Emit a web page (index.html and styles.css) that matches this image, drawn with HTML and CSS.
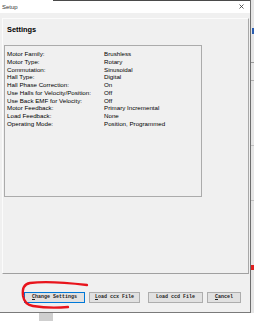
FILE: index.html
```html
<!DOCTYPE html>
<html>
<head>
<meta charset="utf-8">
<link rel="stylesheet" href="styles.css">
</head>
<body>
<div class="screen">
  <div class="dialog">
    <div class="titlebar">
      <span class="title">Setup</span>
      <svg class="close" width="5" height="5" viewBox="0 0 5 5"><path d="M0.5 0.5L4.5 4.5M4.5 0.5L0.5 4.5" stroke="#333" stroke-width="0.8"/></svg>
    </div>
    <div class="body">
      <div class="panel">
        <div class="heading">Settings</div>
        <div class="listbox">
          <div class="grid">
            <span>Motor Family:</span><span>Brushless</span>
            <span>Motor Type:</span><span>Rotary</span>
            <span>Commutation:</span><span>Sinusoidal</span>
            <span>Hall Type:</span><span>Digital</span>
            <span>Hall Phase Correction:</span><span>On</span>
            <span>Use Halls for Velocity/Position:</span><span>Off</span>
            <span>Use Back EMF for Velocity:</span><span>Off</span>
            <span>Motor Feedback:</span><span>Primary Incremental</span>
            <span>Load Feedback:</span><span>None</span>
            <span>Operating Mode:</span><span>Position, Programmed</span>
          </div>
        </div>
      </div>
      <div class="buttons">
        <button class="btn btn-change focused"><u>C</u>hange Settings</button>
        <button class="btn btn-ccx"><u>L</u>oad ccx File</button>
        <button class="btn btn-ccd">Load ccd File</button>
        <button class="btn btn-cancel"><u>C</u>ancel</button>
      </div>
    </div>
  </div>
  <div class="strip"></div>
</div>
<div class="below">
  <div class="block"></div>
</div>
<svg class="scribble" width="254" height="321" viewBox="0 0 254 321">
  <path d="M87 285 C70 283 45 281 30 283 C24 284 22 289 23 296 C24 302 27 305 33 306 C45 308 58 308 68 307" fill="none" stroke="#e8141c" stroke-width="2.3" stroke-linecap="round"/>
</svg>
</body>
</html>
```
FILE: styles.css
```css
html, body {
  margin: 0;
  padding: 0;
}
body {
  width: 254px;
  height: 321px;
  overflow: hidden;
  position: relative;
  background: #ffffff;
  font-family: "Liberation Sans", Arial, sans-serif;
  color: #000;
}
.screen {
  display: flex;
  height: 313px;
}
.dialog {
  width: 250px;
  height: 312px;
  display: flex;
  flex-direction: column;
  border-right: 1px solid #6e6e6e;
  border-bottom: 1px solid #7a7a7a;
}
.titlebar {
  height: 13px;
  background: linear-gradient(to right, transparent 53px, #4a4a4a 53px) no-repeat top left / 100% 1px, #ffffff;
  display: flex;
  align-items: center;
  justify-content: space-between;
  padding: 0 6px 0 2px;
  flex: none;
}
.title {
  font-size: 6px;
  line-height: 6px;
  color: #333;
}
.close {
  display: block;
}
.body {
  flex: 1;
  background: #f0f0f0;
  padding: 5px 1px 0 2px;
  display: flex;
  flex-direction: column;
}
.panel {
  height: 254px;
  border-top: 1px solid #fbfbfb;
  border-left: 1px solid #fbfbfb;
  border-right: 1px solid #a8a8a8;
  border-bottom: 1px solid #a0a0a0;
  background: #f0f0f0;
}
.heading {
  height: 19px;
  padding: 7px 0 0 4px;
  font-weight: bold;
  font-size: 7.4px;
  line-height: 8px;
  color: #000;
}
.listbox {
  margin-left: 1px;
  border: 1px solid #ababab;
  padding: 4px 0 0 2px;
  width: 194px;
  height: 146px;
}
.grid {
  display: grid;
  grid-template-columns: 97px 1fr;
  font-size: 6.2px;
  line-height: 7.75px;
  white-space: nowrap;
  color: #000;
}
.buttons {
  display: flex;
  padding-left: 22px;
  margin-top: 18px;
}
.btn {
  height: 11px;
  margin: 0;
  padding: 0;
  background: #e1e1e1;
  border: 1px solid #adadad;
  font-family: "Liberation Mono", "Courier New", monospace;
  font-size: 5px;
  font-weight: bold;
  line-height: 9px;
  color: #222;
  text-align: center;
}
.focused {
  border-color: #0078d7;
}
.btn-change { width: 61px; }
.btn-ccx { width: 51px; margin-left: 4px; }
.btn-ccd { width: 55px; margin-left: 8px; }
.btn-cancel { width: 34px; margin-left: 4px; }
.strip {
  flex: 1;
  background:
    linear-gradient(#2a5db0, #2a5db0) no-repeat 1px 28px / 2px 6px,
    linear-gradient(#e02020, #e02020) no-repeat 0 265px / 3px 5px,
    linear-gradient(#9a9a9a, #9a9a9a) no-repeat 0 62px / 3px 1px,
    linear-gradient(#b0b0b0, #b0b0b0) no-repeat 0 80px / 3px 1px,
    linear-gradient(#c0c0c0, #c0c0c0) no-repeat 0 145px / 3px 1px,
    linear-gradient(#c0c0c0, #c0c0c0) no-repeat 0 200px / 3px 1px,
    #e6e6e6;
}
.below {
  height: 8px;
  padding-left: 39px;
}
.block {
  width: 14px;
  height: 8px;
  background: #cfcfcf;
}
.scribble {
  position: absolute;
  left: 0;
  top: 0;
  pointer-events: none;
}
```
